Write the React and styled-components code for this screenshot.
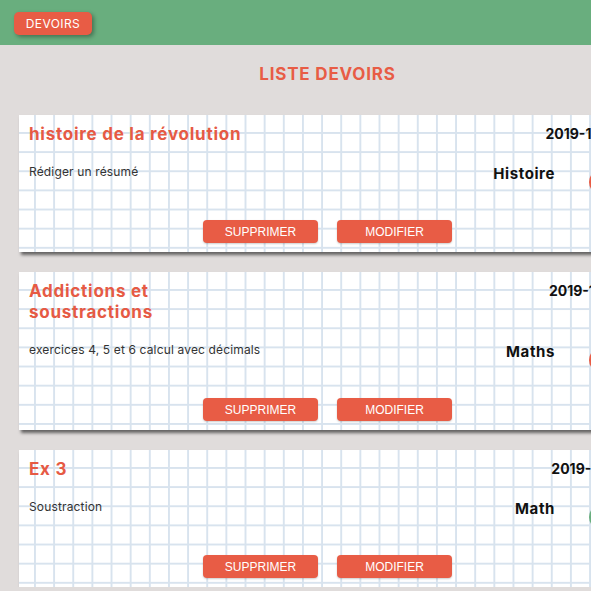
import React from "react";
import styled, { createGlobalStyle } from "styled-components";

const GlobalStyle = createGlobalStyle`
  body {
    margin: 0;
    background: #e0dcdb;
    overflow-x: hidden;
    font-family: Inter, "Open Sans", sans-serif;
  }
`;

const Page = styled.div`
  width: 655px;
`;

const Header = styled.header`
  height: 45px;
  background: #69ae7e;
  padding: 12px 14px;
  box-sizing: border-box;
`;

const NavButton = styled.button`
  height: 23px;
  width: 78px;
  border: none;
  border-radius: 5px;
  background: #e85c45;
  color: #fff;
  font-family: Inter, sans-serif;
  font-size: 12px;
  letter-spacing: 0.4px;
  box-shadow: 2px 2px 4px rgba(0, 0, 0, 0.35);
  padding: 0;
`;

const Heading = styled.h2`
  margin: 0;
  padding: 19px 0 30px;
  line-height: 21px;
  text-align: center;
  color: #e85c45;
  font-size: 17px;
  font-weight: 700;
  letter-spacing: 0.8px;
`;

const List = styled.div`
  display: flex;
  flex-direction: column;
  gap: 20px;
  padding: 0 19px;
`;

const Card = styled.div`
  background-color: #fff;
  background-image: linear-gradient(to right, #d8e3ee 2px, transparent 2px),
    linear-gradient(to bottom, #d8e3ee 2px, transparent 2px);
  background-size: 19.15px 19.15px;
  background-position: 15px 17px;
  box-shadow: 2px 3px 3px rgba(0, 0, 0, 0.55);
  padding: 9px 10px 9px;
  display: grid;
  grid-template-columns: 1fr auto;
  row-gap: 19px;
`;

const Title = styled.h3`
  margin: 0;
  max-width: 230px;
  font-size: 17px;
  line-height: 21px;
  font-weight: 700;
  letter-spacing: 0.75px;
  color: #e65a44;
`;

const Date = styled.div`
  justify-self: end;
  font-size: 14px;
  font-weight: 700;
  line-height: 21px;
  color: #111;
  margin: -1px 4px 0 0;
`;

const Desc = styled.p`
  margin: 0;
  font-size: 12px;
  line-height: 16px;
  letter-spacing: 0.15px;
  color: #333;
  white-space: nowrap;
`;

const SubjectRow = styled.div`
  display: flex;
  align-items: flex-start;
  justify-self: end;
  margin-right: 13px;
`;

const Subject = styled.span`
  font-size: 15px;
  font-weight: 700;
  line-height: 20px;
  letter-spacing: 0.6px;
  color: #111;
`;

const Dot = styled.span`
  width: 24px;
  height: 24px;
  border-radius: 50%;
  margin: 6px 0 0 34px;
  background: ${(p) => p.color};
`;

const Actions = styled.div`
  grid-column: 1 / -1;
  display: flex;
  justify-content: center;
  gap: 19px;
  margin-top: 7px;
`;

const Action = styled.button`
  width: 115px;
  height: 23px;
  border: none;
  border-radius: 4px;
  background: #e85c45;
  color: #fff;
  font-family: "Liberation Sans", Arial, sans-serif;
  font-size: 12px;
  padding: 0;
  box-shadow: 0 1px 2px rgba(0, 0, 0, 0.2);
`;

const devoirs = [
  {
    titre: "histoire de la révolution",
    desc: "Rédiger un résumé",
    date: "2019-11-20",
    matiere: "Histoire",
    couleur: "#e85c45",
  },
  {
    titre: "Addictions et soustractions",
    desc: "exercices 4, 5 et 6 calcul avec décimals",
    date: "2019-11-21",
    matiere: "Maths",
    couleur: "#e85c45",
  },
  {
    titre: "Ex 3",
    desc: "Soustraction",
    date: "2019-11-11",
    matiere: "Math",
    couleur: "#69ae7e",
  },
];

const App = () => {
  return (
    <Page>
      <GlobalStyle />
      <Header>
        <NavButton>DEVOIRS</NavButton>
      </Header>
      <Heading>LISTE DEVOIRS</Heading>
      <List>
        {devoirs.map((d) => (
          <Card key={d.titre}>
            <Title>{d.titre}</Title>
            <Date>{d.date}</Date>
            <Desc>{d.desc}</Desc>
            <SubjectRow>
              <Subject>{d.matiere}</Subject>
              <Dot color={d.couleur} />
            </SubjectRow>
            <Actions>
              <Action>SUPPRIMER</Action>
              <Action>MODIFIER</Action>
            </Actions>
          </Card>
        ))}
      </List>
    </Page>
  );
};

export default App;
